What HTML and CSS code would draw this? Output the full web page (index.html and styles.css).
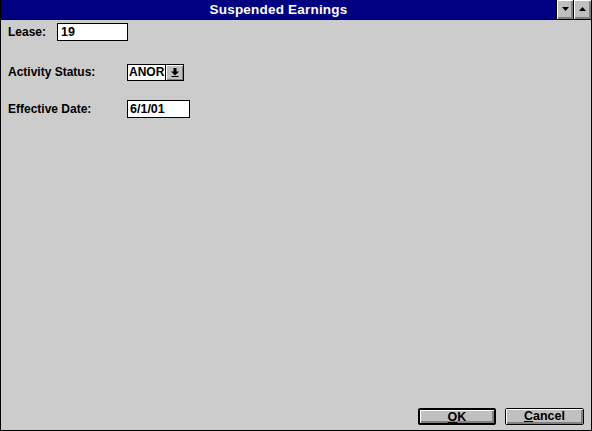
FILE: index.html
```html
<!DOCTYPE html>
<html lang="en">
<head>
    <meta charset="UTF-8">
    <title>Suspended Earnings</title>
    <link rel="stylesheet" href="styles.css">
</head>
<body>
    <div class="window">
        <div class="titlebar">
            <div class="title">Suspended Earnings</div>
            <div class="sysbtn">
                <svg width="7" height="4" viewBox="0 0 7 4"><path d="M0 0h7L3.5 4z" fill="#000"/></svg>
            </div>
            <div class="sysbtn">
                <svg width="7" height="4" viewBox="0 0 7 4"><path d="M0 4h7L3.5 0z" fill="#000"/></svg>
            </div>
        </div>

        <div class="form">
            <div class="row row-lease">
                <label class="lbl lbl-short">Lease:</label>
                <div class="field field-lease">19</div>
            </div>

            <div class="row row-status">
                <label class="lbl">Activity Status:</label>
                <div class="combo">
                    <div class="combo-text">ANOR</div>
                    <div class="combo-btn">
                        <svg width="8" height="9" viewBox="0 0 8 9">
                            <path d="M2.5 0h3v3.5H8L4 7.5 0 3.5h2.5z" fill="#000"/>
                            <rect x="0.5" y="8" width="7" height="1" fill="#000"/>
                        </svg>
                    </div>
                </div>
            </div>

            <div class="row row-date">
                <label class="lbl">Effective Date:</label>
                <div class="field field-date">6/1/01</div>
            </div>
        </div>

        <div class="footer">
            <button class="btn btn-default"><span class="face"><u>O</u>K</span></button>
            <button class="btn"><span class="face"><u>C</u>ancel</span></button>
        </div>
    </div>
</body>
</html>
```

FILE: styles.css
```css
body {
    margin: 0;
    padding: 0;
    background: #cccccc;
    font-family: "Liberation Sans", Arial, sans-serif;
    font-size: 12px;
    font-weight: bold;
    color: #000;
}

.window {
    width: 592px;
    height: 431px;
    box-sizing: border-box;
    border: 1px solid #000;
    border-top: 0;
    background: #cccccc;
    display: flex;
    flex-direction: column;
}

.titlebar {
    height: 19px;
    background: #000080;
    border-bottom: 1px solid #000;
    display: flex;
    align-items: stretch;
}

.title {
    flex: 1;
    color: #fff;
    font-size: 13.5px;
    line-height: 19px;
    text-align: center;
    letter-spacing: 0.2px;
}

.sysbtn {
    width: 17px;
    box-sizing: border-box;
    border-left: 1px solid #000;
    background: #c0c0c0;
    box-shadow: inset 1px 1px 0 #fff, inset -2px -2px 0 #808080;
    display: flex;
    align-items: center;
    justify-content: center;
    padding-bottom: 1px;
}

.sysbtn:last-child {
    width: 18px;
}

.form {
    padding-left: 7px;
}

.row {
    display: flex;
    align-items: center;
}

.row-lease {
    margin-top: 3px;
}

.row-status {
    margin-top: 22px;
}

.row-date {
    margin-top: 19px;
}

.lbl {
    width: 119px;
    line-height: 18px;
}

.lbl-short {
    width: 49px;
}

.field {
    height: 18px;
    box-sizing: border-box;
    border: 1px solid #000;
    background: #fff;
    line-height: 16px;
    font-size: 12.5px;
}

.field-lease {
    width: 71px;
    padding-left: 3px;
}

.field-date {
    width: 63px;
    padding-left: 2px;
}

.combo {
    width: 57px;
    height: 17px;
    box-sizing: border-box;
    border: 1px solid #000;
    background: #fff;
    display: flex;
}

.combo-text {
    flex: 1;
    line-height: 15px;
    font-size: 12px;
    padding-left: 1px;
    border-right: 1px solid #000;
}

.combo-btn {
    width: 17px;
    background: #c0c0c0;
    box-shadow: inset 1px 1px 0 #fff, inset -1px -1px 0 #808080;
    display: flex;
    align-items: center;
    justify-content: center;
}

.footer {
    margin-top: auto;
    display: flex;
    justify-content: flex-end;
    gap: 9px;
    padding: 0 7px 5px 0;
}

.btn {
    font: inherit;
    width: 78px;
    height: 17px;
    box-sizing: border-box;
    padding: 0;
    border: 1px solid #000;
    border-radius: 2px;
    background: #c0c0c0;
    display: flex;
}

.btn-default {
    border-width: 2px;
}

.btn + .btn {
    width: 79px;
}

.face {
    flex: 1;
    box-shadow: inset 1px 1px 0 #fff, inset -2px -2px 0 #808080;
    line-height: 14px;
    text-align: center;
    font-size: 12.5px;
}

.btn u {
    text-decoration-thickness: 1px;
    text-underline-offset: 1px;
}
```
